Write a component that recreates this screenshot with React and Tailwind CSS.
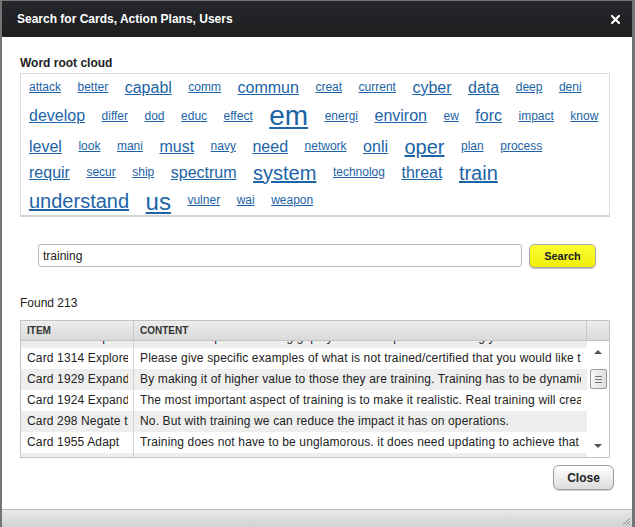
const sizeClass = {
  12: "text-[12px]",
  16: "text-[16px]",
  20: "text-[20px]",
  24: "text-[24px]",
  28: "text-[28px]",
};

const cloudRows = [
  [["attack", 12], ["better", 12], ["capabl", 16], ["comm", 12], ["commun", 16], ["creat", 12], ["current", 12], ["cyber", 16], ["data", 16], ["deep", 12], ["deni", 12]],
  [["develop", 16], ["differ", 12], ["dod", 12], ["educ", 12], ["effect", 12], ["em", 28], ["energi", 12], ["environ", 16], ["ew", 12], ["forc", 16], ["impact", 12], ["know", 12]],
  [["level", 16], ["look", 12], ["mani", 12], ["must", 16], ["navy", 12], ["need", 16], ["network", 12], ["onli", 16], ["oper", 20], ["plan", 12], ["process", 12]],
  [["requir", 16], ["secur", 12], ["ship", 12], ["spectrum", 16], ["system", 20], ["technolog", 12], ["threat", 16], ["train", 20]],
  [["understand", 20], ["us", 24], ["vulner", 12], ["wai", 12], ["weapon", 12]],
];

const results = [
  ["Card 1310 Explore gaps", "Think of the specific training gaps you have experienced during your career and why they matter"],
  ["Card 1314 Explore", "Please give specific examples of what is not trained/certified that you would like to see trained"],
  ["Card 1929 Expand the", "By making it of higher value to those they are training. Training has to be dynamic and current"],
  ["Card 1924 Expand the", "The most important aspect of training is to make it realistic. Real training will create confidence"],
  ["Card 298 Negate the", "No. But with training we can reduce the impact it has on operations."],
  ["Card 1955 Adapt", "Training does not have to be unglamorous. it does need updating to achieve that goal."],
  ["Card 1960 Develop", "Better training for everyone involved in operations."],
];

function WordCloud() {
  return (
    <div className="mt-[3px] w-[590px] h-[144px] border border-[#dddddd] border-b-2 border-b-[#d2d2d2] pl-[8px] pt-[5px] flex flex-col gap-y-[3px]">
      {cloudRows.map((row, i) => (
        <div key={i} className="flex items-center gap-x-[16.5px]">
          {row.map(([word, size]) => (
            <a
              key={word}
              href="#"
              className={`${sizeClass[size]} leading-[1.15] text-[#1c64a6] underline`}
            >
              {word}
            </a>
          ))}
        </div>
      ))}
    </div>
  );
}

function ResultsTable() {
  return (
    <div className="mt-[10px] w-[590px] border border-[#c4c4c4]">
      <div className="flex h-[20px] border-b border-[#c4c4c4] bg-gradient-to-b from-[#ededed] to-[#dadada] text-[10px] font-bold text-[#333333]">
        <div className="w-[113px] border-r border-[#c8c8c8] pl-[6px] leading-[19px]">ITEM</div>
        <div className="w-[453px] border-r border-[#c8c8c8] pl-[6px] leading-[19px]">CONTENT</div>
        <div className="w-[22px]"></div>
      </div>
      <div className="flex h-[116px] overflow-hidden">
        <div className="w-[566px]">
          <div className="mt-[-14px]">
            {results.map(([item, content], i) => (
              <div
                key={i}
                className={`flex h-[21px] text-[12px] leading-[21px] tracking-[0.15px] text-[#222222] ${i % 2 === 0 ? "bg-[#eeeeee]" : "bg-white"}`}
              >
                <div className="w-[113px] border-r border-[#d4d4d4] pl-[6px] pr-[5px]">
                  <div className="overflow-hidden whitespace-nowrap">{item}</div>
                </div>
                <div className="w-[453px] pl-[6px] pr-[6px]">
                  <div className="overflow-hidden whitespace-nowrap">{content}</div>
                </div>
              </div>
            ))}
          </div>
        </div>
        <div className="w-[22px] bg-white flex flex-col items-center pt-[9px]">
          <div className="w-0 h-0 border-x-[4px] border-x-transparent border-b-[4px] border-b-[#555555]"></div>
          <div className="mt-[15px] w-[17px] h-[20px] rounded-[2px] border border-[#9a9a9a] bg-gradient-to-r from-[#f6f6f6] to-[#dedede] flex flex-col items-center justify-center gap-[2px]">
            <div className="w-[7px] h-px bg-[#777777]"></div>
            <div className="w-[7px] h-px bg-[#777777]"></div>
            <div className="w-[7px] h-px bg-[#777777]"></div>
          </div>
          <div className="mt-[55px] w-0 h-0 border-x-[4px] border-x-transparent border-t-[4px] border-t-[#555555]"></div>
        </div>
      </div>
    </div>
  );
}

export default function App() {
  return (
    <div className="w-[635px] h-[527px] flex flex-col overflow-hidden border-l-2 border-r-[3px] border-t border-[#747474] bg-white font-['Liberation_Sans',Arial,sans-serif]">
      <div className="h-[36px] shrink-0 flex items-center justify-between pl-[15px] pr-[12px] bg-gradient-to-b from-[#25272a] to-[#1c1e20]">
        <span className="text-[12px] font-bold text-white">Search for Cards, Action Plans, Users</span>
        <svg width="9" height="9" viewBox="0 0 9 9">
          <path d="M1 1 L8 8 M8 1 L1 8" stroke="#ffffff" strokeWidth="2.2" strokeLinecap="square" />
        </svg>
      </div>

      <div className="flex flex-col pl-[18px] pr-[18px] pt-[19px]">
        <div className="text-[12px] font-bold leading-[14px] text-[#222222]">Word root cloud</div>
        <WordCloud />

        <div className="mt-[27px] w-[590px] flex items-start gap-[7px] pl-[18px] pr-[14px]">
          <input
            readOnly
            value="training"
            className="flex-1 h-[23px] border border-[#b9b9b9] rounded-[3px] px-[4px] text-[12px] text-[#222222] outline-none"
          />
          <button className="w-[67px] h-[24px] rounded-[5px] border border-[#a8a8a8] bg-gradient-to-b from-[#ffff30] to-[#eeee00] shadow-[0_1px_1px_rgba(0,0,0,0.25)] text-[11px] font-bold text-[#222222]">
            Search
          </button>
        </div>

        <div className="mt-[28px] text-[12px] leading-[14px] text-[#222222]">Found 213</div>
        <ResultsTable />

        <div className="mt-[7px] flex justify-end">
          <button className="w-[61px] h-[25px] rounded-[6px] border border-[#9c9c9c] bg-gradient-to-b from-white to-[#dcdcdc] shadow-[0_1px_1px_rgba(0,0,0,0.2)] text-[12px] font-bold text-[#222222]">
            Close
          </button>
        </div>
      </div>

      <div className="flex-1"></div>

      <div className="h-[18px] shrink-0 border-t border-[#bababa] bg-gradient-to-b from-[#e8e8e8] to-[#d2d2d2] flex justify-end items-end pr-[1px] pb-[1px]">
        <svg width="10" height="10" viewBox="0 0 10 10">
          <path d="M9 2 L2 9 M9 5 L5 9 M9 8 L8 9" stroke="#8a8a8a" strokeWidth="1" />
        </svg>
      </div>
    </div>
  );
}
